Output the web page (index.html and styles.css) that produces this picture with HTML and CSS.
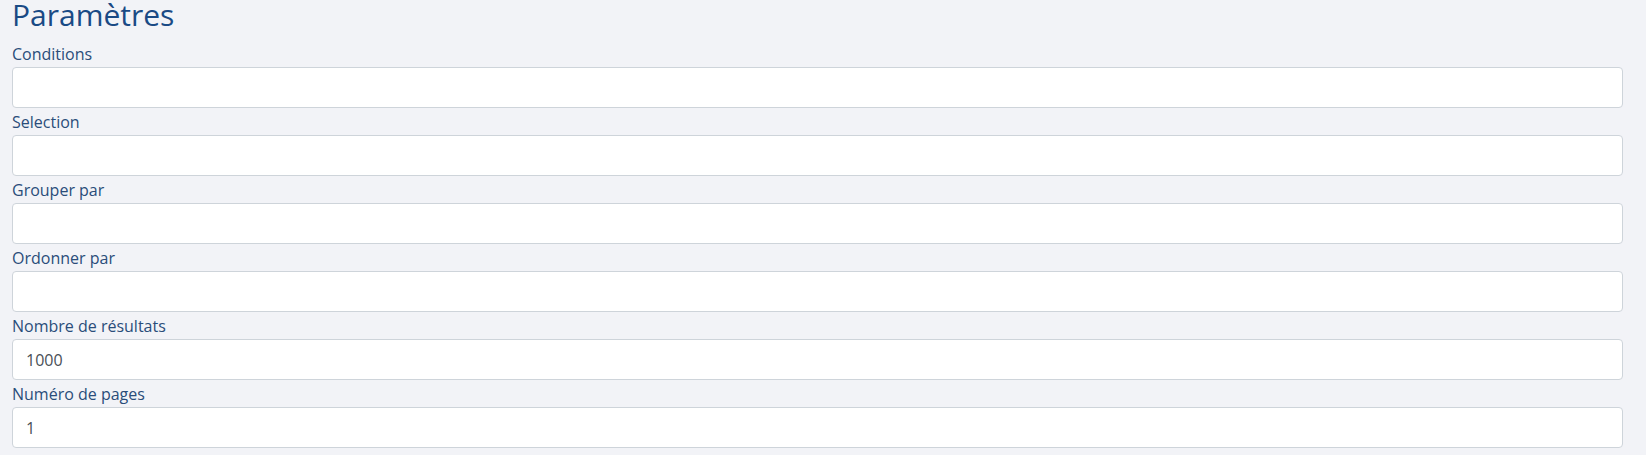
FILE: index.html
```html
<!DOCTYPE html>
<html lang="fr">
<head>
<meta charset="utf-8">
<title>Paramètres</title>
<link rel="stylesheet" href="styles.css">
</head>
<body>
<div class="page">
  <h1 class="title">Paramètres</h1>
  <div class="field">
    <label class="label">Conditions</label>
    <input class="input" type="text" value="">
  </div>
  <div class="field">
    <label class="label">Selection</label>
    <input class="input" type="text" value="">
  </div>
  <div class="field">
    <label class="label">Grouper par</label>
    <input class="input" type="text" value="">
  </div>
  <div class="field">
    <label class="label">Ordonner par</label>
    <input class="input" type="text" value="">
  </div>
  <div class="field">
    <label class="label">Nombre de résultats</label>
    <input class="input" type="text" value="1000">
  </div>
  <div class="field">
    <label class="label">Numéro de pages</label>
    <input class="input" type="text" value="1">
  </div>
</div>
</body>
</html>
```

FILE: styles.css
```css
html, body {
  margin: 0;
  padding: 0;
  background: #f2f3f7;
}
body {
  font-family: "Open Sans", "Noto Sans", sans-serif;
}
.page {
  padding: 0 23px 0 12px;
  display: flex;
  flex-direction: column;
}
.title {
  margin: 0;
  height: 40px;
  padding-top: 2px;
  box-sizing: border-box;
  font-size: 30px;
  line-height: 26px;
  font-weight: 400;
  color: #1a4a85;
}
.field {
  display: flex;
  flex-direction: column;
}
.label {
  display: block;
  padding-top: 3px;
  height: 22px;
  line-height: 22px;
  margin-bottom: 2px;
  font-size: 16px;
  color: #2a4d7a;
}
.input {
  box-sizing: border-box;
  height: 41px;
  width: 100%;
  margin: 0;
  padding: 0 13px;
  border: 1px solid #ced4da;
  border-radius: 4px;
  background: #fff;
  font-family: inherit;
  font-size: 16px;
  color: #495057;
  outline: none;
}
```
